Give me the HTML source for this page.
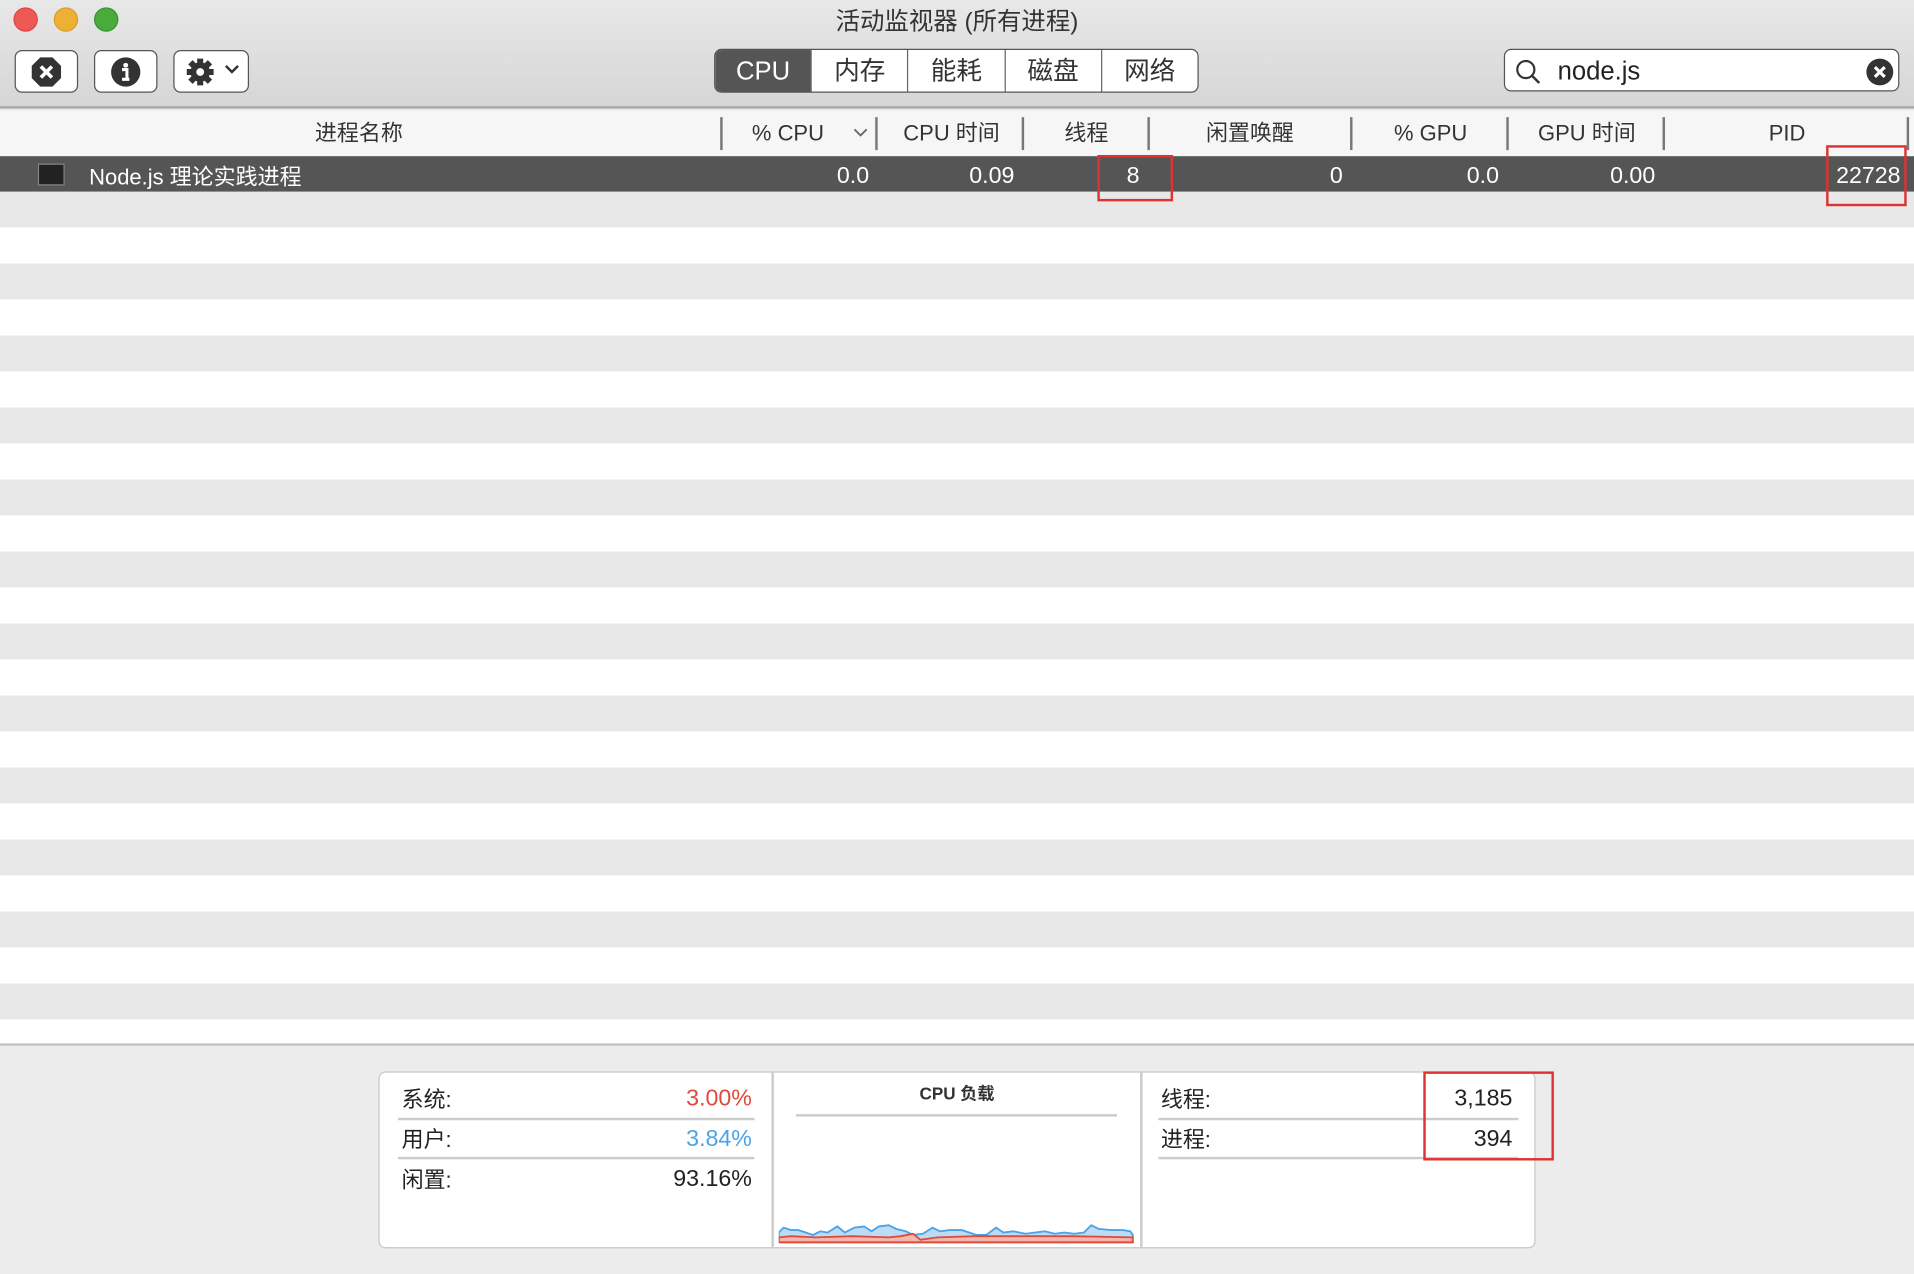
<!DOCTYPE html>
<html><head><meta charset="utf-8"><style>
*{margin:0;padding:0;box-sizing:border-box}
html,body{width:1914px;height:1274px;overflow:hidden;background:#ececec}
#w{position:absolute;left:0;top:0;width:1568px;height:1044px;transform:scale(1.220663,1.220307);transform-origin:0 0;font-family:"Liberation Sans","Noto Sans CJK SC",sans-serif;color:#222}
.a{position:absolute}
.tb{left:0;top:0;width:1568px;height:89px;background:linear-gradient(#e8e8e8,#d6d6d6);border-bottom:2px solid #a9a9a9}
.dot{width:20px;height:20px;border-radius:50%;top:6px}
.btn{top:41px;height:35px;background:#fff;border:1.5px solid #555;border-radius:6px}
.seg{top:40px;left:585px;width:397px;height:36px;border:1.5px solid #555;border-radius:6px;background:#fff;display:flex;overflow:hidden;font-size:21px}
.seg div{border-left:1.5px solid #666;flex:1;text-align:center;line-height:35px;color:#333}
.hdr{top:91px;left:0;width:1568px;height:37px;background:#f6f6f6;font-size:18px;color:#333}
.hdr span{position:absolute;top:7px;line-height:22px;white-space:nowrap}
.sep{top:96px;width:2px;height:27px;background:#777}
.row{left:0;width:1568px;height:29.5px}
.sel{top:128px;height:29px;background:#555;color:#fff;font-size:19px}
.sel span{position:absolute;top:6px;line-height:22px;white-space:nowrap}
.rb{border:2px solid #d33;position:absolute}
.panel{left:310px;top:878px;width:948px;height:145px;background:#fff;border:1.5px solid #c8c8c8;border-radius:6px}
.lbl{font-size:18px;line-height:22px;white-space:nowrap}
.num{font-size:19px;line-height:22px;white-space:nowrap;text-align:right}
.ln{height:2px;background:#ccc}
</style></head><body><div id="w">
<div class="a tb"></div>
<div class="a dot" style="left:11px;background:#ec5a53;border:1px solid #d44"></div>
<div class="a dot" style="left:44px;background:#eeb033;border:1px solid #d99c28"></div>
<div class="a dot" style="left:77px;background:#48ab3a;border:1px solid #3a9330"></div>
<div class="a" style="left:0;top:5px;width:1568px;text-align:center;font-size:20px;line-height:26px;color:#333">活动监视器 (所有进程)</div>
<div class="a btn" style="left:12px;width:52px"><svg class="a" style="left:12px;top:4px" width="26" height="26" viewBox="0 0 26 26"><polygon points="8,1 18,1 25,8 25,18 18,25 8,25 1,18 1,8" fill="#333"/><path d="M8.5 8.5L17.5 17.5M17.5 8.5L8.5 17.5" stroke="#fff" stroke-width="3"/></svg></div>
<div class="a btn" style="left:77px;width:52px"><svg class="a" style="left:12px;top:4px" width="26" height="26" viewBox="0 0 26 26"><circle cx="13" cy="13" r="12" fill="#333"/><circle cx="13" cy="7.5" r="2" fill="#fff"/><path d="M10 11h4v8h2M10 19h6" stroke="#fff" stroke-width="2.5" fill="none"/></svg></div>
<div class="a btn" style="left:142px;width:62px"><svg class="a" style="left:8px;top:4px" width="26" height="26" viewBox="0 0 26 26"><g fill="#333"><circle cx="13" cy="13" r="8"/><g stroke="#333" stroke-width="5"><path d="M13 2v22M2 13h22M5 5l16 16M21 5L5 21"/></g></g><circle cx="13" cy="13" r="3.2" fill="#fff"/></svg><svg class="a" style="left:40px;top:10px" width="14" height="10" viewBox="0 0 14 10"><path d="M2 2l5 5 5-5" stroke="#333" stroke-width="2" fill="none"/></svg></div>
<div class="a seg"><div style="border:none;background:#555;color:#fff">CPU</div><div>内存</div><div>能耗</div><div>磁盘</div><div>网络</div></div>
<div class="a" style="left:1232px;top:40px;width:324px;height:35px;background:#fff;border:1.5px solid #555;border-radius:6px"></div>
<svg class="a" style="left:1240px;top:47px" width="24" height="24" viewBox="0 0 24 24"><circle cx="10" cy="10" r="7" stroke="#333" stroke-width="1.8" fill="none"/><path d="M15 15l6 6" stroke="#333" stroke-width="2"/></svg>
<div class="a" style="left:1276px;top:47px;font-size:21px;line-height:24px;color:#222">node.js</div>
<svg class="a" style="left:1528px;top:47px" width="24" height="24" viewBox="0 0 24 24"><circle cx="12" cy="12" r="11" fill="#333"/><path d="M8 8l8 8M16 8l-8 8" stroke="#fff" stroke-width="2.6"/></svg>
<div class="a hdr"><span style="left:258px">进程名称</span><span style="left:616px">% CPU</span><span style="left:740px">CPU 时间</span><span style="left:872px">线程</span><span style="left:988px">闲置唤醒</span><span style="left:1142px">% GPU</span><span style="left:1260px">GPU 时间</span><span style="left:1449px">PID</span></div>
<svg class="a" style="left:698px;top:104px" width="14" height="10" viewBox="0 0 14 10"><path d="M2 2l5 5 5-5" stroke="#666" stroke-width="1.5" fill="none"/></svg>
<div class="a sep" style="left:590px"></div><div class="a sep" style="left:717px"></div><div class="a sep" style="left:837px"></div><div class="a sep" style="left:940px"></div><div class="a sep" style="left:1106px"></div><div class="a sep" style="left:1234px"></div><div class="a sep" style="left:1362px"></div><div class="a sep" style="left:1562px"></div>
<div class="a" style="left:0;top:157px;width:1568px;height:698px;background:repeating-linear-gradient(#e8e8e8 0 29.5px,#fff 29.5px 59px)"></div>
<div class="a" style="left:0;top:855px;width:1568px;height:2px;background:#c4c4c4"></div>
<div class="a row sel"><span style="left:31px;top:6px;width:22px;height:18px;background:#222;border:1px solid #888"></span><span style="left:73px;font-size:18px">Node.js 理论实践进程</span><span style="right:856px">0.0</span><span style="right:737px">0.09</span><span style="left:923px">8</span><span style="right:468px">0</span><span style="right:340px">0.0</span><span style="right:212px">0.00</span><span style="right:11px">22728</span></div>
<div class="rb" style="left:899px;top:127px;width:62px;height:38px"></div>
<div class="rb" style="left:1496px;top:119px;width:66px;height:50px"></div>
<div class="a panel"></div>
<div class="a lbl" style="left:329px;top:890px">系统:</div><div class="a num" style="right:952px;top:890px;color:#e04a3a">3.00%</div>
<div class="a ln" style="left:326px;top:916px;width:292px"></div>
<div class="a lbl" style="left:329px;top:923px">用户:</div><div class="a num" style="right:952px;top:923px;color:#4aa3e6">3.84%</div>
<div class="a ln" style="left:326px;top:948px;width:292px"></div>
<div class="a lbl" style="left:329px;top:956px">闲置:</div><div class="a num" style="right:952px;top:956px">93.16%</div>
<div class="a" style="left:632px;top:878px;width:2px;height:145px;background:#ccc"></div>
<div class="a" style="left:934px;top:878px;width:2px;height:145px;background:#ccc"></div>
<div class="a" style="left:634px;top:886px;width:300px;text-align:center;font-size:14px;line-height:20px;font-weight:bold;color:#333">CPU 负载</div>
<div class="a ln" style="left:652px;top:913px;width:263px"></div>
<svg class="a" style="left:638px;top:998px" width="292" height="22" viewBox="0 0 292 22"><path d="M0 12L4 8 10 10 16 10 22 12 28 14 34 11 40 12 48 7 54 12 62 8 70 7 76 11 82 7 90 6 96 9 104 11 110 14 118 13 126 8 132 11 140 10 150 10 162 14 170 14 178 8 184 12 192 11 202 13 210 12 218 11 226 13 234 12 242 13 250 12 256 6 262 9 272 10 282 10 288 11 290 14 290 20 0 20Z" fill="#bcdcf6" stroke="#4aa3e6" stroke-width="1.5"/><path d="M0 16L10 15 30 16 60 15 90 16 100 15 110 13 116 18 130 16 160 15 200 15 240 15 290 16 290 20 0 20Z" fill="#f3b7ad" stroke="#e04a3a" stroke-width="1.5"/></svg>
<div class="a lbl" style="left:951px;top:890px">线程:</div><div class="a num" style="right:329px;top:890px">3,185</div>
<div class="a ln" style="left:949px;top:916px;width:295px"></div>
<div class="a lbl" style="left:951px;top:923px">进程:</div><div class="a num" style="right:329px;top:923px">394</div>
<div class="a ln" style="left:949px;top:948px;width:295px"></div>
<div class="rb" style="left:1166px;top:878px;width:107px;height:73px"></div>
</div></body></html>
